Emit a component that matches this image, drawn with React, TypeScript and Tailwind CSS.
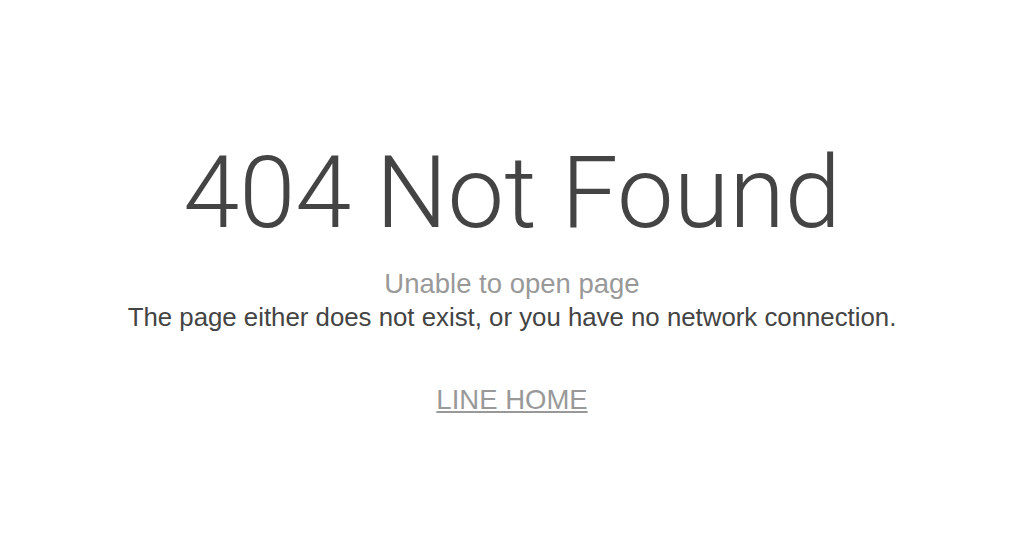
export default function App() {
  return (
    <main className="min-h-screen w-full bg-white flex flex-col items-center text-center font-['Liberation_Sans',Arial,sans-serif]">
      {/* Error heading */}
      <h1 className="mt-[138px] text-[101px] leading-[110px] font-light text-[#444] font-['Roboto',sans-serif]">
        404 Not Found
      </h1>
      <div className="mt-[19px] text-[27.5px] leading-[34px] text-[#999]">
        Unable to open page
      </div>
      <div className="text-[25.8px] leading-[33px] text-[#444]">
        The page either does not exist, or you have no network connection.
      </div>
      <a href="#" className="mt-[49px] text-[27.5px] leading-[33px] text-[#999] underline">
        LINE HOME
      </a>
    </main>
  );
}
